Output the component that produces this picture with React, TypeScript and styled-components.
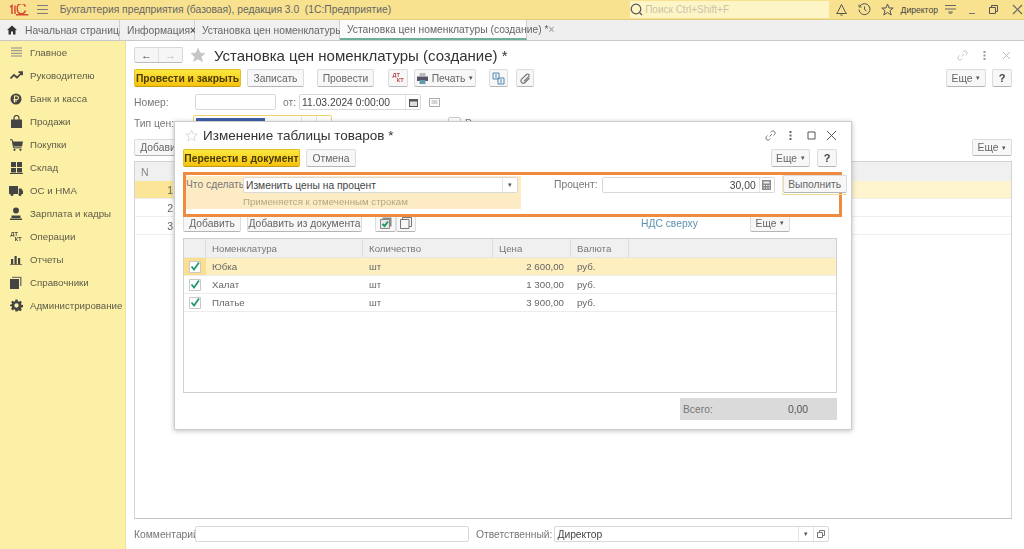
import * as React from "react";
import styled, { createGlobalStyle } from "styled-components";

const GlobalStyle = createGlobalStyle`
  html, body {
    margin: 0;
    padding: 0;
    background: #fff;
  }
  body {
    font-family: "Liberation Sans", Arial, sans-serif;
    font-size: 10.5px;
    color: #555;
  }
`;

const Page = styled.div`
  width: 1024px;
  height: 549px;
  position: relative;
  overflow: hidden;
  display: flex;
  flex-direction: column;
  filter: blur(0.35px);
`;

/* top bar */
const TopBar = styled.div`
  height: 19px;
  flex: none;
  display: flex;
  align-items: center;
  background: #f8e28f;
  border-bottom: 1px solid #e0cd84;
`;

const Logo = styled.svg`
  width: 20px;
  height: 12px;
  margin-left: 9px;
`;

const Burger = styled.svg`
  width: 11px;
  height: 9px;
  margin-left: 8px;
`;

const AppTitle = styled.div`
  margin-left: 12px;
  width: 575px;
  font-size: 10.3px;
  color: #666;
  white-space: pre;
`;

const SearchBox = styled.div`
  width: 200px;
  height: 17px;
  display: flex;
  align-items: center;
  gap: 2px;
  background: #fdf5c6;
  color: #c9c4a6;
  font-size: 10px;
`;

const TopIcon = styled.svg<{ $ml: number }>`
  width: 13px;
  height: 13px;
  margin-left: ${(p) => p.$ml}px;
  flex: none;
`;

const UserName = styled.div`
  margin-left: 7px;
  font-size: 8.6px;
  color: #444;
`;

/* tabs */
const TabsRow = styled.div`
  height: 21px;
  flex: none;
  display: flex;
  background: #efefef;
  border-bottom: 1px solid #c9c9c9;
  box-sizing: border-box;
`;

const Tab = styled.div<{ $w: number; $active?: boolean }>`
  width: ${(p) => p.$w}px;
  box-sizing: border-box;
  display: flex;
  align-items: center;
  padding: 0 7px;
  justify-content: space-between;
  white-space: nowrap;
  font-size: 10.3px;
  color: #666;
  border-right: 1px solid #d0d0d0;
  background: ${(p) => (p.$active ? "#fbfbfb" : "#f0f0f0")};
  border-bottom: ${(p) => (p.$active ? "2px solid #6fae97" : "none")};
`;

const HomeTab = styled(Tab)`
  justify-content: flex-start;
  gap: 8px;
`;

const TabClose = styled.span<{ $light?: boolean }>`
  font-size: 10px;
  font-weight: bold;
  color: ${(p) => (p.$light ? "#aaa" : "#555")};
`;

/* layout */
const Body = styled.div`
  flex: 1;
  min-height: 0;
  display: flex;
`;

const Sidebar = styled.nav`
  width: 126px;
  flex: none;
  padding-top: 0;
  background: #fcf0a6;
  border-right: 1px solid #efe09a;
  box-sizing: border-box;
`;

const NavItem = styled.div`
  height: 23px;
  display: flex;
  align-items: center;
  color: #5c5a48;
  font-size: 9.7px;
  &:first-child {
    margin-top: 0;
  }
`;

const NavIcon = styled.div`
  width: 30px;
  flex: none;
  display: flex;
  justify-content: center;
  padding-left: 2px;
  box-sizing: border-box;
  color: #4a4a40;
`;

const DkMark = styled.div`
  width: 11px;
  font-size: 5.5px;
  font-weight: bold;
  line-height: 5px;
  color: #444;
  span {
    display: block;
    text-align: right;
  }
`;

const Main = styled.main`
  flex: 1;
  min-width: 0;
  display: flex;
  flex-direction: column;
  padding: 6px 12px 0 8px;
`;

const TitleRow = styled.div`
  height: 16px;
  display: flex;
  align-items: center;
`;

const NavGroup = styled.div`
  width: 49px;
  height: 16px;
  display: flex;
  box-sizing: border-box;
  background: #f6f6f6;
  border: 1px solid #d8d8d8;
  border-bottom-color: #bbb;
  border-radius: 2px;
`;

const NavArrow = styled.div<{ $dim?: boolean }>`
  flex: 1;
  display: flex;
  align-items: center;
  justify-content: center;
  font-size: 11px;
  font-weight: bold;
  color: ${(p) => (p.$dim ? "#bbb" : "#444")};
  & + & {
    border-left: 1px solid #e0e0e0;
  }
`;

const Title = styled.div<{ $size: number }>`
  font-size: ${(p) => p.$size}px;
  color: #333;
  white-space: nowrap;
`;

const Spacer = styled.div`
  flex: 1;
`;

const Toolbar = styled.div`
  display: flex;
  align-items: center;
`;

const Btn = styled.div<{ $w: number; $ml?: number; $h?: number; $primary?: boolean }>`
  width: ${(p) => p.$w}px;
  height: ${(p) => p.$h ?? 18}px;
  margin-left: ${(p) => p.$ml ?? 0}px;
  flex: none;
  box-sizing: border-box;
  display: flex;
  align-items: center;
  justify-content: center;
  gap: 4px;
  font-size: 10.3px;
  white-space: nowrap;
  border-radius: 2px;
  color: ${(p) => (p.$primary ? "#4b3b00" : "#666")};
  font-weight: ${(p) => (p.$primary ? "bold" : "normal")};
  background: ${(p) =>
    p.$primary ? "linear-gradient(#fce83f, #f5c20d)" : "#f7f7f7"};
  border: 1px solid ${(p) => (p.$primary ? "#e6bd22" : "#dcdcdc")};
  border-bottom-color: ${(p) => (p.$primary ? "#c49c10" : "#b5b5b5")};
`;

const Help = styled(Btn)`
  font-weight: bold;
  color: #444;
  font-size: 11px;
`;

const Caret = styled.span`
  font-size: 7px;
  color: #555;
`;

const Field = styled.div<{ $w: number; $ml?: number; $focus?: boolean }>`
  width: ${(p) => p.$w}px;
  height: 16px;
  margin-left: ${(p) => p.$ml ?? 0}px;
  flex: none;
  box-sizing: border-box;
  display: flex;
  align-items: center;
  background: #fff;
  font-size: 10.3px;
  color: #444;
  border: 1px solid ${(p) => (p.$focus ? "#ecd46a" : "#d9d9d9")};
  border-radius: 2px;
  padding-left: 2px;
  overflow: hidden;
`;

const FieldText = styled.div<{ $right?: boolean }>`
  flex: 1;
  white-space: nowrap;
  text-align: ${(p) => (p.$right ? "right" : "left")};
  padding-right: ${(p) => (p.$right ? 3 : 0)}px;
`;

const FieldCell = styled.div`
  width: 14px;
  height: 100%;
  flex: none;
  display: flex;
  align-items: center;
  justify-content: center;
  border-left: 1px solid #e4e4e4;
  font-size: 7px;
  color: #555;
`;

const Selected = styled.span`
  background: #3f5fa8;
  color: #3f5fa8;
`;

const FormRow = styled.div<{ $mt: number }>`
  display: flex;
  align-items: center;
  margin-top: ${(p) => p.$mt}px;
`;

const Label = styled.div<{ $w?: number; $ml?: number; $right?: boolean }>`
  width: ${(p) => (p.$w ? `${p.$w}px` : "auto")};
  margin-left: ${(p) => p.$ml ?? 0}px;
  flex: none;
  font-size: 10.3px;
  color: #777;
  white-space: nowrap;
  text-align: ${(p) => (p.$right ? "right" : "left")};
`;

const CheckBox = styled.div`
  width: 11px;
  height: 11px;
  margin-left: 116px;
  flex: none;
  background: #fff;
  border: 1px solid #ccc;
  border-radius: 2px;
`;

/* document grid */
const DocGrid = styled.div`
  flex: 1;
  margin-top: 5px;
  box-sizing: border-box;
  border: 1px solid #d4d4d4;
  border-bottom-color: #c6c6c6;
`;

const DocHead = styled.div`
  height: 19px;
  display: flex;
  align-items: center;
  padding-left: 6px;
  background: #f0f0f0;
  color: #888;
`;

const DocRow = styled.div<{ $active?: boolean }>`
  height: 18px;
  box-sizing: border-box;
  display: flex;
  background: ${(p) => (p.$active ? "#fef4cd" : "#fff")};
  border-bottom: 1px solid #eee;
`;

const DocNum = styled.div<{ $active?: boolean }>`
  width: 38px;
  box-sizing: content-box;
  display: flex;
  align-items: center;
  justify-content: flex-end;
  background: ${(p) => (p.$active ? "#fbe596" : "transparent")};
  color: #666;
`;

const Footer = styled.div`
  height: 30px;
  flex: none;
  display: flex;
  align-items: center;
`;

/* dialog */
const Dialog = styled.section`
  position: absolute;
  left: 174px;
  top: 121px;
  width: 678px;
  height: 309px;
  box-sizing: border-box;
  display: flex;
  flex-direction: column;
  padding: 0 14px 0 8px;
  background: #fff;
  border: 1px solid #ccc;
  box-shadow: 0 1px 5px rgba(0, 0, 0, 0.25);
`;

const DialogHead = styled.div`
  height: 27px;
  flex: none;
  display: flex;
  align-items: center;
`;

const WinIcon = styled.svg<{ $ml: number }>`
  width: 11px;
  height: 11px;
  margin-left: ${(p) => p.$ml}px;
  flex: none;
`;

const ActionFrame = styled.div`
  position: relative;
  z-index: 1;
  height: 45px;
  margin: 5px -5px 0 0;
  box-sizing: border-box;
  border: 3px solid #ee8b3e;
  display: flex;
  align-items: flex-start;
`;

const ActionLeft = styled.div`
  width: 335px;
  height: 33px;
  flex: none;
  margin-top: 1px;
  box-sizing: border-box;
  background: #fdebc4;
  display: flex;
  flex-wrap: wrap;
  align-content: flex-start;
  padding-top: 1px;
`;

const Hint = styled.div`
  width: 100%;
  margin-top: 3px;
  padding-left: 57px;
  color: #b4a77f;
  font-size: 9.7px;
`;

const RunBtnWrap = styled.div`
  margin-left: 7px;
  padding-bottom: 1px;
  border-bottom: 1px solid #ecdc96;
  border-left: 1px solid #f3e7b3;
`;

const ButtonsRow = styled.div`
  display: flex;
  align-items: center;
  margin-top: -3px;
`;

const LinkText = styled.div`
  margin-left: 225px;
  width: 109px;
  color: #5c92ad;
  font-size: 10.3px;
  white-space: nowrap;
`;

const Grid = styled.div`
  height: 155px;
  margin-top: 6px;
  box-sizing: border-box;
  border: 1px solid #cfcfcf;
  flex: none;
`;

const GridLine = styled.div<{ $head?: boolean; $active?: boolean }>`
  display: grid;
  grid-template-columns: 22px 157px 130px 78px 58px 1fr;
  height: ${(p) => (p.$head ? 19 : 18)}px;
  box-sizing: border-box;
  background: ${(p) => (p.$head ? "#f0f0f0" : p.$active ? "#fdefc0" : "#fff")};
  border-bottom: 1px solid ${(p) => (p.$head ? "#e6e6e6" : "#ececec")};
  color: ${(p) => (p.$head ? "#777" : "#666")};
  font-size: 9.7px;
`;

const Cell = styled.div<{ $right?: boolean; $head?: boolean }>`
  display: flex;
  align-items: center;
  justify-content: ${(p) => (p.$right ? "flex-end" : "flex-start")};
  padding: 0 6px;
  white-space: nowrap;
  border-right: 1px solid ${(p) => (p.$head ? "#dcdcdc" : "transparent")};
  overflow: hidden;
`;

const CheckCell = styled.div<{ $active?: boolean }>`
  display: flex;
  align-items: center;
  justify-content: center;
  background: ${(p) => (p.$active ? "#fbdf90" : "transparent")};
`;

const Tick = styled.svg`
  width: 12px;
  height: 12px;
`;

const Totals = styled.div`
  align-self: flex-end;
  width: 157px;
  height: 22px;
  margin-top: 5px;
  flex: none;
  display: flex;
  align-items: center;
  background: #dadada;
  color: #777;
  font-size: 10.3px;
`;

const TotalLabel = styled.div`
  width: 34px;
  height: 100%;
  display: flex;
  align-items: center;
  padding-left: 3px;
  box-sizing: border-box;
`;

const TotalValue = styled.div`
  width: 94px;
  text-align: right;
  color: #555;
`;

const Grey = "#6d6d6d";

const StarIcon: React.FC<{ size: number; color: string; filled?: boolean; ml?: number }> = ({ size, color, filled, ml = 0 }) => (
  <svg width={size} height={size} viewBox="0 0 24 24" style={{ marginLeft: ml, flex: "none" }}>
    <path
      d="M12 2l3 7 7.5.6-5.7 4.9 1.8 7.3L12 18l-6.600 3.800 1.800-7.300L1.500 9.600 9 9z"
      fill={filled ? color : "none"}
      stroke={color}
      strokeWidth={filled ? 1 : 1.5}
    />
  </svg>
);

const NAV: { label: string; icon: React.ReactNode }[] = [
  { label: "Главное", icon: <svg width="13" height="11" viewBox="0 0 13 11" stroke="#888" strokeWidth="1"><path d="M1 1h11M1 3.700h11M1 6.300h11M1 9h11" /></svg> },
  { label: "Руководителю", icon: <svg width="13" height="9" viewBox="0 0 13 9" fill="none" stroke="#444" strokeWidth="1.700"><path d="M.5 7.500 4 4l3 2.500L11.500 2M8.500 1.200h3.600v3" /></svg> },
  { label: "Банк и касса", icon: <svg width="12" height="12" viewBox="0 0 12 12"><circle cx="6" cy="6" r="5.500" fill="#444" /><path d="M4.500 9.500V3h2.200a1.700 1.700 0 0 1 0 3.500H3.500M3.500 8h3.500" fill="none" stroke="#fcf0a6" strokeWidth="1.100" /></svg> },
  { label: "Продажи", icon: <svg width="11" height="13" viewBox="0 0 11 13"><path d="M0 4.500h11V13H0z" fill="#444" /><path d="M3 5V3a2.500 2.500 0 0 1 5 0v2" fill="none" stroke="#444" strokeWidth="1.200" /></svg> },
  { label: "Покупки", icon: <svg width="13" height="12" viewBox="0 0 13 12"><path d="M2.500 2.500H13l-1 5H3.500z" fill="#444" /><path d="M0 .8h2.200l1.300 8h8" fill="none" stroke="#444" /><circle cx="4.500" cy="10.800" r="1.100" fill="#444" /><circle cx="10.500" cy="10.800" r="1.100" fill="#444" /></svg> },
  { label: "Склад", icon: <svg width="13" height="12" viewBox="0 0 13 12" fill="#444"><path d="M1 0h5v5H1zM7 0h5v5H7zM1 6h5v4.500H1zM7 6h5v4.500H7zM0 11h13v1H0z" /></svg> },
  { label: "ОС и НМА", icon: <svg width="14" height="10" viewBox="0 0 14 10" fill="#444"><path d="M0 0h9v8H0zM9.800 2.500h2.400L14 5v3H9.800z" /><circle cx="3" cy="8.500" r="1.500" /><circle cx="11" cy="8.500" r="1.500" /></svg> },
  { label: "Зарплата и кадры", icon: <svg width="12" height="13" viewBox="0 0 12 13" fill="#444"><circle cx="6" cy="3.500" r="3" /><path d="M1.500 8.500h9V11h-9zM0 11.500h12V13H0z" /></svg> },
  { label: "Операции", icon: <DkMark>ДТ<span>КТ</span></DkMark> },
  { label: "Отчеты", icon: <svg width="12" height="10" viewBox="0 0 12 10" fill="#444"><path d="M1 4h2.200v5H1zM4.500 1h2.200v8H4.500zM8 3h2.200v6H8zM0 9.200h12v.8H0z" /></svg> },
  { label: "Справочники", icon: <svg width="12" height="13" viewBox="0 0 12 13" fill="#444"><path d="M0 3h9v10H0z" /><path d="M2 2V.8h9.500V10H10V2z" fill="#777" /></svg> },
  { label: "Администрирование", icon: <svg width="13" height="13" viewBox="0 0 24 24" fill="#444"><path fillRule="evenodd" d="M10 1h4l.6 3.200 2 .8L19.300 3 22 6l-1.900 2.700.8 2 3.100.6v4l-3.100.6-.8 2L22 20l-3 2.700-2.600-1.900-2 .8L14 23h-4l-.6-3.200-2-.8L4.700 21 2 18l1.900-2.700-.8-2L0 12.700v-2l3.100-.9.8-2L2 5.500 4.700 3l2.700 1.900 2-.8zM12 8a4 4 0 1 0 0 8 4 4 0 0 0 0-8z" /></svg> },
];

const GOODS = [
  { name: "Юбка", price: "2 600,00" },
  { name: "Халат", price: "1 300,00" },
  { name: "Платье", price: "3 900,00" },
];

export default function App() {
  return (
    <>
      <GlobalStyle />
      <Page>
        <TopBar>
          <Logo viewBox="0 0 20 12" fill="none" stroke="#d7472f" strokeWidth="1.500">
            <path d="M1 3l2-1.500V10M6 10V1.500M16.500 2.500A4 4 0 0 0 8.500 5a4 4 0 0 0 8 1.500" />
            <path d="M7 10.800h12.500" />
          </Logo>
          <Burger viewBox="0 0 11 9" stroke="#777" strokeWidth="1">
            <path d="M0 .5h11M0 4.500h11M0 8.500h11" />
          </Burger>
          <AppTitle>Бухгалтерия предприятия (базовая), редакция 3.0  (1С:Предприятие)</AppTitle>
          <SearchBox>
            <svg width="13" height="13" viewBox="0 0 13 13" fill="none" stroke="#555" strokeWidth="1.200">
              <circle cx="6" cy="6" r="4.800" />
              <path d="M9.500 9.500 12 12" />
            </svg>
            Поиск Ctrl+Shift+F
          </SearchBox>
          <TopIcon $ml={6} viewBox="0 0 13 13" fill="none" stroke="#555">
            <path d="M6.500 1.500 10 8.500l1.500 2h-10l1.500-2zM5.300 12h2.400" />
          </TopIcon>
          <TopIcon $ml={10} viewBox="0 0 13 13" fill="none" stroke="#555">
            <path d="M2 3a5.500 5.500 0 1 1-1 3.500M1 1.500V4h2.500M6.500 3.500v3l2 1.500" />
          </TopIcon>
          <TopIcon $ml={10} viewBox="0 0 13 13" fill="none" stroke="#555">
            <path d="M6.500 1 8 5h4.200L9 7.700l1.200 4.300-3.700-2.500L2.800 12 4 7.700.8 5H5z" />
          </TopIcon>
          <UserName>Директор</UserName>
          <TopIcon $ml={6} viewBox="0 0 13 13" fill="none" stroke="#666">
            <path d="M1 2.500h11M1 6h11M4.500 9h4L6.500 11z" />
          </TopIcon>
          <TopIcon $ml={10} viewBox="0 0 13 13" fill="none" stroke="#777">
            <path d="M2 10.500h6" />
          </TopIcon>
          <TopIcon $ml={7} viewBox="0 0 13 13" fill="none" stroke="#555">
            <path d="M2.500 4.500h6v6h-6zM4.500 4.500v-2h6v6h-2" />
          </TopIcon>
          <TopIcon $ml={11} viewBox="0 0 13 13" fill="none" stroke="#666" strokeWidth="1.200">
            <path d="M2 2l9 9M11 2l-9 9" />
          </TopIcon>
        </TopBar>
        <TabsRow>
          <HomeTab $w={120}>
            <svg width="10" height="10" viewBox="0 0 10 10" fill="#333" style={{ flex: "none" }}>
              <path d="M5 .5 10 5H8.500v4.500H6V6.500H4v3H1.500V5H0z" />
            </svg>
            Начальная страница
          </HomeTab>
          <Tab $w={75}>Информация <TabClose>×</TabClose></Tab>
          <Tab $w={145}>Установка цен номенклатуры <TabClose>×</TabClose></Tab>
          <Tab $w={187} $active>Установка цен номенклатуры (создание) * <TabClose $light>×</TabClose></Tab>
        </TabsRow>
        <Body>
          <Sidebar>
            {NAV.map((n) => (
              <NavItem key={n.label}>
                <NavIcon>{n.icon}</NavIcon>
                {n.label}
              </NavItem>
            ))}
          </Sidebar>
          <Main>
            <TitleRow>
              <NavGroup>
                <NavArrow>←</NavArrow>
                <NavArrow $dim>→</NavArrow>
              </NavGroup>
              <StarIcon size={16} color="#c6c6c6" filled ml={7} />
              <Title $size={15} style={{ marginLeft: 8 }}>Установка цен номенклатуры (создание) *</Title>
              <Spacer />
              <WinIcon $ml={0} viewBox="0 0 11 11" fill="none" stroke="#c4c4c4">
                <path d="M4.500 6.500 7 4M5.500 2.500l1-1a2 2 0 0 1 3 3l-1 1M5.500 8.500l-1 1a2 2 0 0 1-3-3l1-1" />
              </WinIcon>
              <WinIcon $ml={11} viewBox="0 0 11 11" fill="#999">
                <path d="M4.500 1h2v2h-2zM4.500 4.500h2v2h-2zM4.500 8h2v2h-2z" />
              </WinIcon>
              <WinIcon $ml={11} viewBox="0 0 11 11" fill="none" stroke="#bbb">
                <path d="M2 2l7 7M9 2l-7 7" />
              </WinIcon>
            </TitleRow>
            <Toolbar style={{ marginTop: 6 }}>
              <Btn $w={107} $primary>Провести и закрыть</Btn>
              <Btn $w={57} $ml={6}>Записать</Btn>
              <Btn $w={57} $ml={13}>Провести</Btn>
              <Btn $w={20} $ml={14}>
                <DkMark style={{ color: "#b44" }}>ДТ<span>КТ</span></DkMark>
              </Btn>
              <Btn $w={62} $ml={6}>
                <svg width="11" height="11" viewBox="0 0 11 11" style={{ flex: "none" }}>
                  <path d="M2.500 0h6v3h-6z" fill="#bbb" />
                  <path d="M0 3.500h11v4.500H0z" fill="#556" />
                  <path d="M2.500 7h6v4h-6z" fill="#69a" />
                </svg>
                Печать <Caret>▾</Caret>
              </Btn>
              <Btn $w={19} $ml={13}>
                <svg width="13" height="13" viewBox="0 0 13 13" fill="none" stroke="#4f87b0">
                  <path d="M1 1h6v6H1zM6 6h6v6H6z" />
                  <path d="M3 3h2M3 5h2M8 8h2M8 10h2" />
                </svg>
              </Btn>
              <Btn $w={18} $ml={8}>
                <svg width="11" height="11" viewBox="0 0 11 11" fill="none" stroke="#777" strokeWidth="1.200">
                  <path d="M9.500 5 5 9.500a2.300 2.300 0 0 1-3.300-3.300L6.500 1.500a1.500 1.500 0 0 1 2.200 2.200L4 8.200" />
                </svg>
              </Btn>
              <Spacer />
              <Btn $w={40}>Еще <Caret>▾</Caret></Btn>
              <Help $w={20} $ml={6}>?</Help>
            </Toolbar>
            <FormRow $mt={7}>
              <Label $w={61}>Номер:</Label>
              <Field $w={81} />
              <Label $ml={7}>от:</Label>
              <Field $w={122} $ml={3}>
                <FieldText>11.03.2024  0:00:00</FieldText>
                <FieldCell>
                  <svg width="9" height="9" viewBox="0 0 9 9" fill="#555"><path d="M0 1h9v8H0z" /><path d="M1 3.500h7v4.500H1z" fill="#ddd" /></svg>
                </FieldCell>
              </Field>
              <svg width="11" height="9" viewBox="0 0 11 9" fill="none" stroke="#aaa" style={{ marginLeft: 8 }}>
                <path d="M.5.500h10v8H.5zM2.500 3h6M2.500 5h6" />
              </svg>
            </FormRow>
            <FormRow $mt={5}>
              <Label $w={59}>Тип цен:</Label>
              <Field $w={139} $focus>
                <FieldText><Selected>Номенклатура</Selected></FieldText>
                <FieldCell>▾</FieldCell>
                <FieldCell>□</FieldCell>
              </Field>
              <CheckBox />
              <Label $ml={4}>Рассчитывать цены</Label>
            </FormRow>
            <Toolbar style={{ marginTop: 8 }}>
              <Btn $w={58} $h={17}>Добавить</Btn>
              <Spacer />
              <Btn $w={40} $h={17}>Еще <Caret>▾</Caret></Btn>
            </Toolbar>
            <DocGrid>
              <DocHead>N</DocHead>
              {[1, 2, 3].map((n) => (
                <DocRow key={n} $active={n === 1}>
                  <DocNum $active={n === 1}>{n}</DocNum>
                </DocRow>
              ))}
            </DocGrid>
            <Footer>
              <Label $w={61}>Комментарий:</Label>
              <Field $w={274} />
              <Label $ml={7}>Ответственный:</Label>
              <Field $w={275} $ml={2}>
                <FieldText>Директор</FieldText>
                <FieldCell>▾</FieldCell>
                <FieldCell>
                  <svg width="8" height="8" viewBox="0 0 8 8" fill="none" stroke="#777">
                    <path d="M.5 2.500h5v5h-5zM2.500 2.500v-2h5v5h-2" />
                  </svg>
                </FieldCell>
              </Field>
            </Footer>
          </Main>
        </Body>
        <Dialog>
          <DialogHead>
            <StarIcon size={13} color="#d4d4d4" ml={2} />
            <Title $size={13.500} style={{ marginLeft: 5 }}>Изменение таблицы товаров *</Title>
            <Spacer />
            <WinIcon $ml={0} viewBox="0 0 11 11" fill="none" stroke="#777">
              <path d="M4.500 6.500 7 4M5.500 2.500l1-1a2 2 0 0 1 3 3l-1 1M5.500 8.500l-1 1a2 2 0 0 1-3-3l1-1" />
            </WinIcon>
            <WinIcon $ml={9} viewBox="0 0 11 11" fill="#666">
              <path d="M4.500 1h2v2h-2zM4.500 4.500h2v2h-2zM4.500 8h2v2h-2z" />
            </WinIcon>
            <WinIcon $ml={10} viewBox="0 0 11 11" fill="none" stroke="#555">
              <path d="M2 2h7v7H2z" />
            </WinIcon>
            <WinIcon $ml={9} viewBox="0 0 11 11" fill="none" stroke="#555">
              <path d="M1 1l9 9M10 1l-9 9" />
            </WinIcon>
          </DialogHead>
          <Toolbar>
            <Btn $w={117} $primary>Перенести в документ</Btn>
            <Btn $w={50} $ml={6}>Отмена</Btn>
            <Spacer />
            <Btn $w={39}>Еще <Caret>▾</Caret></Btn>
            <Help $w={20} $ml={7}>?</Help>
          </Toolbar>
          <ActionFrame>
            <ActionLeft>
              <Label $w={57} $right style={{ lineHeight: "16px", paddingRight: 3, boxSizing: "border-box" }}>Что сделать:</Label>
              <Field $w={275}>
                <FieldText>Изменить цены на процент</FieldText>
                <FieldCell>▾</FieldCell>
              </Field>
              <Hint>Применяется к отмеченным строкам</Hint>
            </ActionLeft>
            <Label $ml={33} style={{ lineHeight: "16px", marginTop: 2 }}>Процент:</Label>
            <Field $w={173} $ml={4} style={{ marginTop: 2 }}>
              <FieldText $right>30,00</FieldText>
              <FieldCell>
                <svg width="9" height="10" viewBox="0 0 9 10" fill="#888"><path d="M0 0h9v10H0z" /><path d="M1.500 1.500h6v2h-6zM1.500 5h1.500v1H1.500zM4 5h1.500v1H4zM6.500 5H8v1H6.500zM1.500 7.500h1.500v1H1.500zM4 7.500h1.500v1H4zM6.500 7.500H8v1H6.500z" fill="#eee" /></svg>
              </FieldCell>
            </Field>
            <RunBtnWrap>
              <Btn $w={64}>Выполнить</Btn>
            </RunBtnWrap>
          </ActionFrame>
          <ButtonsRow>
            <Btn $w={58}>Добавить</Btn>
            <Btn $w={115} $ml={6}>Добавить из документа</Btn>
            <Btn $w={21} $ml={13}>
              <svg width="12" height="12" viewBox="0 0 12 12">
                <path d="M2.500.5h9v9h-9z" fill="#888" />
                <path d="M.5 2.500h9v9h-9z" fill="#e8e8e8" stroke="#888" />
                <path d="M2.500 7 4.500 9 8 4.500" fill="none" stroke="#1f9a5d" strokeWidth="2" />
              </svg>
            </Btn>
            <Btn $w={20}>
              <svg width="12" height="12" viewBox="0 0 12 12" fill="none" stroke="#777">
                <path d="M.5 2.500h8.500v9H.5zM2.500 2.500v-2h9v9H9" />
              </svg>
            </Btn>
            <LinkText>НДС сверху</LinkText>
            <Btn $w={40}>Еще <Caret>▾</Caret></Btn>
          </ButtonsRow>
          <Grid>
            <GridLine $head>
              <Cell $head />
              <Cell $head>Номенклатура</Cell>
              <Cell $head>Количество</Cell>
              <Cell $head>Цена</Cell>
              <Cell $head>Валюта</Cell>
              <Cell />
            </GridLine>
            {GOODS.map((g, i) => (
              <GridLine key={g.name} $active={i === 0}>
                <CheckCell $active={i === 0}>
                  <Tick viewBox="0 0 12 12">
                    <path d="M.5.500h11v11H.5z" fill="#fff" stroke="#c8c8c8" />
                    <path d="M2.500 5.500 5 8.500 10 1.500" fill="none" stroke="#1f9a6d" strokeWidth="1.800" />
                  </Tick>
                </CheckCell>
                <Cell>{g.name}</Cell>
                <Cell>шт</Cell>
                <Cell $right>{g.price}</Cell>
                <Cell>руб.</Cell>
                <Cell />
              </GridLine>
            ))}
          </Grid>
          <Totals>
            <TotalLabel>Всего:</TotalLabel>
            <TotalValue>0,00</TotalValue>
          </Totals>
        </Dialog>
      </Page>
    </>
  );
}
